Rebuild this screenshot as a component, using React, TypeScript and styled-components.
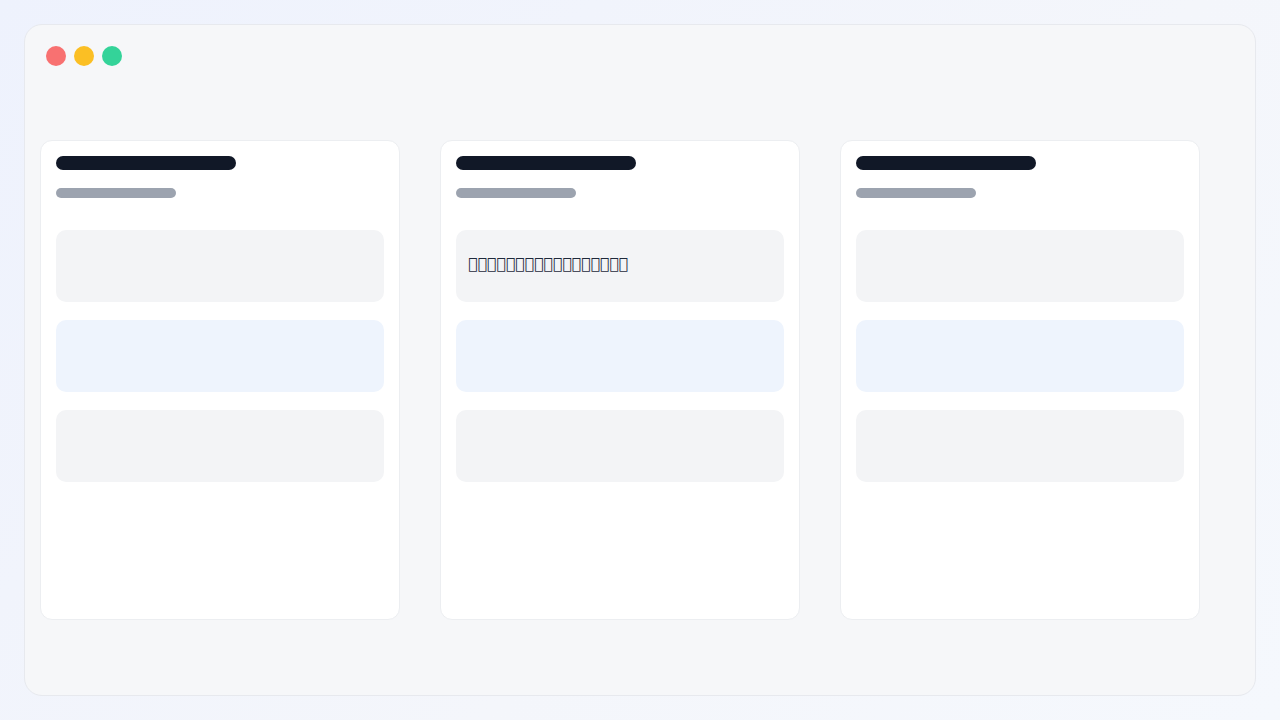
import React from 'react';
import styled, { createGlobalStyle } from 'styled-components';

const GlobalStyle = createGlobalStyle`
  html, body {
    margin: 0;
    padding: 0;
    width: 1280px;
    height: 720px;
    overflow: hidden;
  }
  body {
    font-family: "DejaVu Sans", "Noto Sans", sans-serif;
    background: linear-gradient(135deg, #eef2fd 0%, #f4f6fb 60%, #f5f8fd 100%);
  }
`;

const Page = styled.div`
  box-sizing: border-box;
  width: 1280px;
  height: 720px;
  padding: 24px;
`;

const Window = styled.div`
  box-sizing: border-box;
  height: 100%;
  background: #f6f7f9;
  border: 1px solid #e7e9ee;
  border-radius: 18px;
  padding: 21px 15px;
  display: flex;
  flex-direction: column;
  gap: 74px;
`;

const TitleBar = styled.div`
  display: flex;
  gap: 8px;
  padding-left: 6px;
`;

const Dot = styled.span<{ $color: string }>`
  width: 20px;
  height: 20px;
  border-radius: 50%;
  background: ${(p) => p.$color};
`;

const Board = styled.div`
  display: flex;
  gap: 40px;
`;

const Column = styled.div`
  box-sizing: border-box;
  width: 360px;
  height: 480px;
  background: #ffffff;
  border: 1px solid #eceef1;
  border-radius: 12px;
  padding: 15px;
  display: flex;
  flex-direction: column;
`;

const Heading = styled.div`
  width: 180px;
  height: 14px;
  border-radius: 7px;
  background: #111827;
`;

const SubHeading = styled.div`
  width: 120px;
  height: 10px;
  border-radius: 5px;
  background: #9ca3af;
  margin-top: 18px;
  margin-bottom: 32px;
`;

const Items = styled.div`
  display: flex;
  flex-direction: column;
  gap: 18px;
`;

const Item = styled.div<{ $tint?: boolean }>`
  box-sizing: border-box;
  height: 72px;
  border-radius: 10px;
  background: ${(p) => (p.$tint ? '#eef4fd' : '#f3f4f6')};
  padding: 0 12px 5px;
  display: flex;
  align-items: center;
  font-size: 15.7px;
  color: #1e293b;
`;

const columns = [
  { text: '' },
  { text: '\uE000\uE001\uE002\uE003\uE004\uE005\uE006\uE007\uE008\uE009\uE00A\uE00B\uE00C\uE00D\uE00E\uE00F\uE010' },
  { text: '' },
];

export default function App() {
  return (
    <>
      <GlobalStyle />
      <Page>
        <Window>
          <TitleBar>
            <Dot $color="#f87171" />
            <Dot $color="#fbbf24" />
            <Dot $color="#34d399" />
          </TitleBar>
          <Board>
            {columns.map((c, i) => (
              <Column key={i}>
                <Heading />
                <SubHeading />
                <Items>
                  <Item>{c.text}</Item>
                  <Item $tint />
                  <Item />
                </Items>
              </Column>
            ))}
          </Board>
        </Window>
      </Page>
    </>
  );
}
